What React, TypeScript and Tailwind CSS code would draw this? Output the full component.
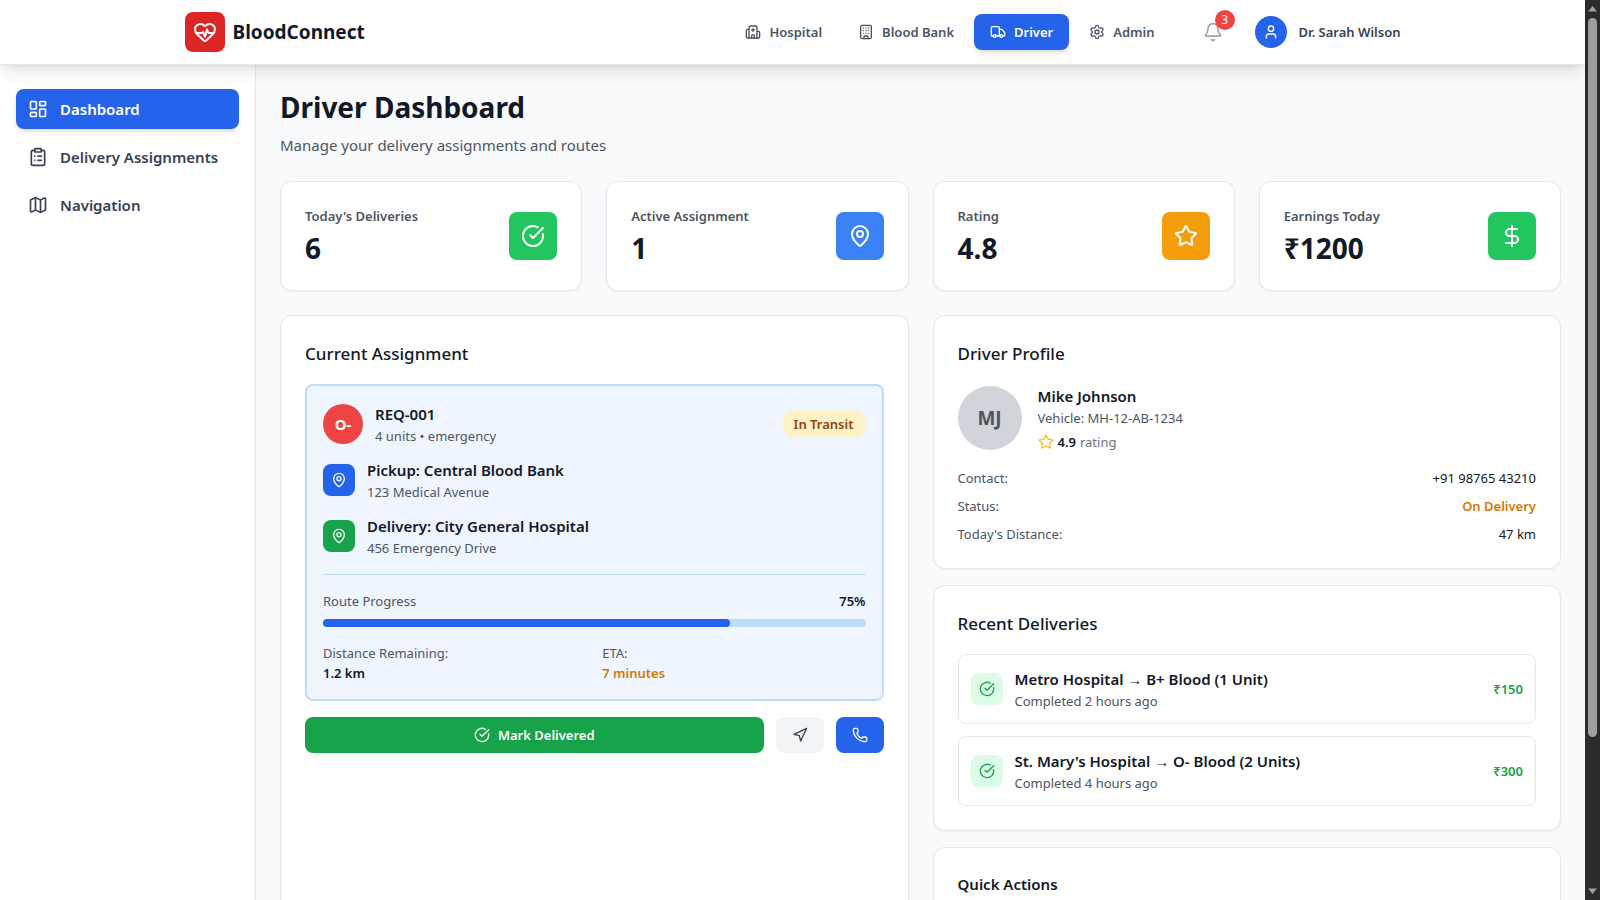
import type { ReactNode } from "react";
import {
  Bell,
  Building,
  CircleCheckBig,
  ClipboardList,
  DollarSign,
  HeartPulse,
  Hospital,
  LayoutDashboard,
  Map,
  MapPin,
  Navigation,
  Phone,
  Settings,
  Star,
  Truck,
  User,
  type LucideIcon,
} from "lucide-react";

const portals: { label: string; icon: LucideIcon; active?: boolean }[] = [
  { label: "Hospital", icon: Hospital },
  { label: "Blood Bank", icon: Building },
  { label: "Driver", icon: Truck, active: true },
  { label: "Admin", icon: Settings },
];

const menu: { label: string; icon: LucideIcon; active?: boolean }[] = [
  { label: "Dashboard", icon: LayoutDashboard, active: true },
  { label: "Delivery Assignments", icon: ClipboardList },
  { label: "Navigation", icon: Map },
];

const stats: { label: string; value: string; icon: LucideIcon; color: string }[] = [
  { label: "Today's Deliveries", value: "6", icon: CircleCheckBig, color: "bg-[#22c55e]" },
  { label: "Active Assignment", value: "1", icon: MapPin, color: "bg-[#3b82f6]" },
  { label: "Rating", value: "4.8", icon: Star, color: "bg-[#f59e0b]" },
  { label: "Earnings Today", value: "₹1200", icon: DollarSign, color: "bg-[#22c55e]" },
];

const stops = [
  { title: "Pickup: Central Blood Bank", address: "123 Medical Avenue", color: "bg-[#2563eb]" },
  { title: "Delivery: City General Hospital", address: "456 Emergency Drive", color: "bg-[#16a34a]" },
];

const deliveries = [
  { title: "Metro Hospital → B+ Blood (1 Unit)", time: "Completed 2 hours ago", amount: "₹150" },
  { title: "St. Mary's Hospital → O- Blood (2 Units)", time: "Completed 4 hours ago", amount: "₹300" },
];

const routeProgress = 75;

function Card({ children, className = "" }: { children: ReactNode; className?: string }) {
  return (
    <section className={`rounded-xl border border-[#e5e7eb] bg-white p-6 shadow-[0_1px_2px_0_rgb(0_0_0/0.05)] ${className}`}>
      {children}
    </section>
  );
}

function Header() {
  return (
    <header className="relative z-10 shrink-0 border-b border-[#e5e7eb] bg-white shadow-[0_10px_15px_-3px_rgb(0_0_0/0.1),0_4px_6px_-4px_rgb(0_0_0/0.1)]">
      <div className="mx-auto flex h-16 max-w-7xl items-center justify-between px-8">
        <a href="#home" className="flex items-center gap-2">
          <span className="flex size-10 items-center justify-center rounded-lg bg-[#dc2626] text-white">
            <HeartPulse className="size-6" />
          </span>
          <span className="text-[19px] leading-7 font-bold">BloodConnect</span>
        </a>
        <div className="flex items-center gap-6">
          <nav aria-label="Portals" className="flex gap-1">
            {portals.map(({ label, icon: Icon, active }) => (
              <a
                key={label}
                href="#portal"
                aria-current={active ? "page" : undefined}
                className={`flex items-center gap-2 rounded-lg px-4 py-2 text-[13px] leading-5 font-semibold ${
                  active
                    ? "bg-[#2563eb] text-white shadow-[0_4px_6px_-1px_rgb(0_0_0/0.1),0_2px_4px_-2px_rgb(0_0_0/0.1)]"
                    : "text-[#4b5563]"
                }`}
              >
                <Icon className="size-4" />
                {label}
              </a>
            ))}
          </nav>
          <button type="button" aria-label="Notifications" className="relative p-2 text-[#9ca3af]">
            <Bell className="size-5" />
            <span className="absolute -top-1 -right-1 flex size-5 items-center justify-center rounded-full bg-[#ef4444] text-xs text-white">
              3
            </span>
          </button>
          <button type="button" className="flex items-center gap-3">
            <span className="flex size-8 items-center justify-center rounded-full bg-[#2563eb] text-white">
              <User className="size-4" />
            </span>
            <span className="text-[13px] leading-5 font-semibold text-[#374151]">Dr. Sarah Wilson</span>
          </button>
        </div>
      </div>
    </header>
  );
}

function Sidebar() {
  return (
    <aside className="w-64 shrink-0 border-r border-[#e5e7eb] bg-white px-4 py-6">
      <nav aria-label="Driver" className="flex flex-col gap-2">
        {menu.map(({ label, icon: Icon, active }) => (
          <a
            key={label}
            href="#section"
            aria-current={active ? "page" : undefined}
            className={`flex items-center gap-3 rounded-lg px-3 py-2 text-[15px] leading-6 font-semibold ${
              active
                ? "bg-[#2563eb] text-white shadow-[0_4px_6px_-1px_rgb(0_0_0/0.1),0_2px_4px_-2px_rgb(0_0_0/0.1)]"
                : "text-[#374151]"
            }`}
          >
            <Icon className="size-5" />
            {label}
          </a>
        ))}
      </nav>
    </aside>
  );
}

function CurrentAssignment() {
  return (
    <Card>
      <h2 className="text-[17px] leading-7 font-medium">Current Assignment</h2>
      <div className="mt-4 rounded-lg border-2 border-[#bfdbfe] bg-[#eff6ff] p-4">
        <div className="flex items-center justify-between">
          <div className="flex items-center gap-3">
            <span className="flex size-10 items-center justify-center rounded-full bg-[#ef4444] text-[15px] font-bold text-white">
              O-
            </span>
            <div>
              <h3 className="text-[15px] leading-6 font-semibold">REQ-001</h3>
              <p className="text-[13px] leading-5 text-[#4b5563]">4 units • emergency</p>
            </div>
          </div>
          <span className="rounded-full bg-[#fef3c7] px-3 py-1 text-[13px] leading-5 font-semibold text-[#92400e]">
            In Transit
          </span>
        </div>
        {stops.map((stop) => (
          <div key={stop.title} className="mt-3 flex items-center gap-3">
            <span className={`flex size-8 items-center justify-center rounded-lg text-white ${stop.color}`}>
              <MapPin className="size-4" />
            </span>
            <div>
              <h3 className="text-[15px] leading-6 font-semibold">{stop.title}</h3>
              <p className="text-[13px] leading-5 text-[#4b5563]">{stop.address}</p>
            </div>
          </div>
        ))}
        <div className="mt-4 border-t border-[#bfdbfe] pt-4 text-[13px] leading-5">
          <div className="flex justify-between">
            <span className="text-[#4b5563]">Route Progress</span>
            <span className="font-semibold">{routeProgress}%</span>
          </div>
          <div
            role="progressbar"
            aria-label="Route Progress"
            aria-valuenow={routeProgress}
            className="mt-2 h-2 rounded-full bg-[#bfdbfe]"
          >
            <div className="h-2 rounded-full bg-[#2563eb]" style={{ width: `${routeProgress}%` }} />
          </div>
          <dl className="mt-4 grid grid-cols-2 gap-4">
            <div>
              <dt className="text-[#4b5563]">Distance Remaining:</dt>
              <dd className="font-semibold">1.2 km</dd>
            </div>
            <div>
              <dt className="text-[#4b5563]">ETA:</dt>
              <dd className="font-semibold text-[#d97706]">7 minutes</dd>
            </div>
          </dl>
        </div>
      </div>
      <div className="mt-4 flex gap-3">
        <button
          type="button"
          className="flex flex-1 items-center justify-center gap-2 rounded-lg bg-[#16a34a] px-4 py-2 text-[13px] leading-5 font-semibold text-white"
        >
          <CircleCheckBig className="size-4" />
          Mark Delivered
        </button>
        <button type="button" aria-label="Navigate" className="rounded-lg bg-[#f3f4f6] px-4 py-2 text-[#374151]">
          <Navigation className="size-4" />
        </button>
        <button type="button" aria-label="Call" className="rounded-lg bg-[#2563eb] px-4 py-2 text-white">
          <Phone className="size-4" />
        </button>
      </div>
    </Card>
  );
}

function DriverProfile() {
  return (
    <Card>
      <h2 className="text-[17px] leading-7 font-medium">Driver Profile</h2>
      <div className="mt-4 flex items-center gap-4">
        <span className="flex size-16 items-center justify-center rounded-full bg-[#d1d5db] text-[19px] font-bold text-[#4b5563]">
          MJ
        </span>
        <div>
          <h3 className="text-[15px] leading-6 font-semibold">Mike Johnson</h3>
          <p className="text-[13px] leading-5 text-[#4b5563]">Vehicle: MH-12-AB-1234</p>
          <p className="mt-1 flex items-center gap-1 text-[13px] leading-5">
            <Star className="size-4 text-[#fbbf24]" />
            <span className="font-semibold">4.9</span>
            <span className="text-[#6b7280]">rating</span>
          </p>
        </div>
      </div>
      <dl className="mt-4 flex flex-col gap-2 text-[13px] leading-5">
        <div className="flex justify-between">
          <dt className="text-[#4b5563]">Contact:</dt>
          <dd>+91 98765 43210</dd>
        </div>
        <div className="flex justify-between">
          <dt className="text-[#4b5563]">Status:</dt>
          <dd className="font-semibold text-[#d97706]">On Delivery</dd>
        </div>
        <div className="flex justify-between">
          <dt className="text-[#4b5563]">Today's Distance:</dt>
          <dd>47 km</dd>
        </div>
      </dl>
    </Card>
  );
}

function RecentDeliveries() {
  return (
    <Card>
      <h2 className="text-[17px] leading-7 font-medium">Recent Deliveries</h2>
      <ul className="mt-4 flex flex-col gap-3">
        {deliveries.map((d) => (
          <li key={d.title} className="flex items-center gap-3 rounded-lg border border-[#e5e7eb] p-3">
            <span className="flex size-8 items-center justify-center rounded-lg bg-[#dcfce7] text-[#16a34a]">
              <CircleCheckBig className="size-4" />
            </span>
            <div className="flex-1">
              <h3 className="text-[15px] leading-6 font-semibold">{d.title}</h3>
              <p className="text-[13px] leading-5 text-[#4b5563]">{d.time}</p>
            </div>
            <span className="text-[13px] leading-5 font-semibold text-[#16a34a]">{d.amount}</span>
          </li>
        ))}
      </ul>
    </Card>
  );
}

function Scrollbar() {
  return (
    <div aria-hidden="true" className="flex w-[15px] shrink-0 flex-col items-center bg-[#2c2c2c] py-[6px]">
      <svg viewBox="0 0 9 6" className="h-[6px] w-[9px] fill-[#9f9f9f]">
        <path d="M0 5.5 4.5 0 9 5.5z" />
      </svg>
      <div className="mt-[6px] flex w-[9px] flex-1 flex-col">
        <div className="h-[719px] rounded-full bg-[#9f9f9f]" />
      </div>
      <svg viewBox="0 0 9 6" className="h-[6px] w-[9px] fill-[#9f9f9f]">
        <path d="M0 .5 4.5 6 9 .5z" />
      </svg>
    </div>
  );
}

export default function App() {
  return (
    <div className="flex h-screen overflow-hidden bg-[#f9fafb] font-['Segoe_UI','Noto_Sans',sans-serif] text-[#111827]">
      <div className="flex min-w-0 flex-1 flex-col">
        <Header />
        <div className="flex min-h-0 flex-1">
          <Sidebar />
          <main className="min-w-0 flex-1 overflow-hidden p-6">
            <h1 className="text-[28px] leading-9 font-bold">Driver Dashboard</h1>
            <p className="mt-2 text-[15px] leading-6 text-[#4b5563]">Manage your delivery assignments and routes</p>
            <div className="mt-6 grid grid-cols-4 gap-6">
              {stats.map(({ label, value, icon: Icon, color }) => (
                <Card key={label} className="flex items-center justify-between">
                  <div>
                    <p className="text-[13px] leading-5 font-semibold text-[#4b5563]">{label}</p>
                    <p className="mt-1 text-[28px] leading-9 font-bold">{value}</p>
                  </div>
                  <span className={`flex size-12 items-center justify-center rounded-lg text-white ${color}`}>
                    <Icon className="size-6" />
                  </span>
                </Card>
              ))}
            </div>
            <div className="mt-6 grid grid-cols-2 gap-6">
              <CurrentAssignment />
              <div className="flex flex-col gap-4">
                <DriverProfile />
                <RecentDeliveries />
                <Card>
                  <h2 className="text-[15px] leading-6 font-semibold">Quick Actions</h2>
                </Card>
              </div>
            </div>
          </main>
        </div>
      </div>
      <Scrollbar />
    </div>
  );
}
